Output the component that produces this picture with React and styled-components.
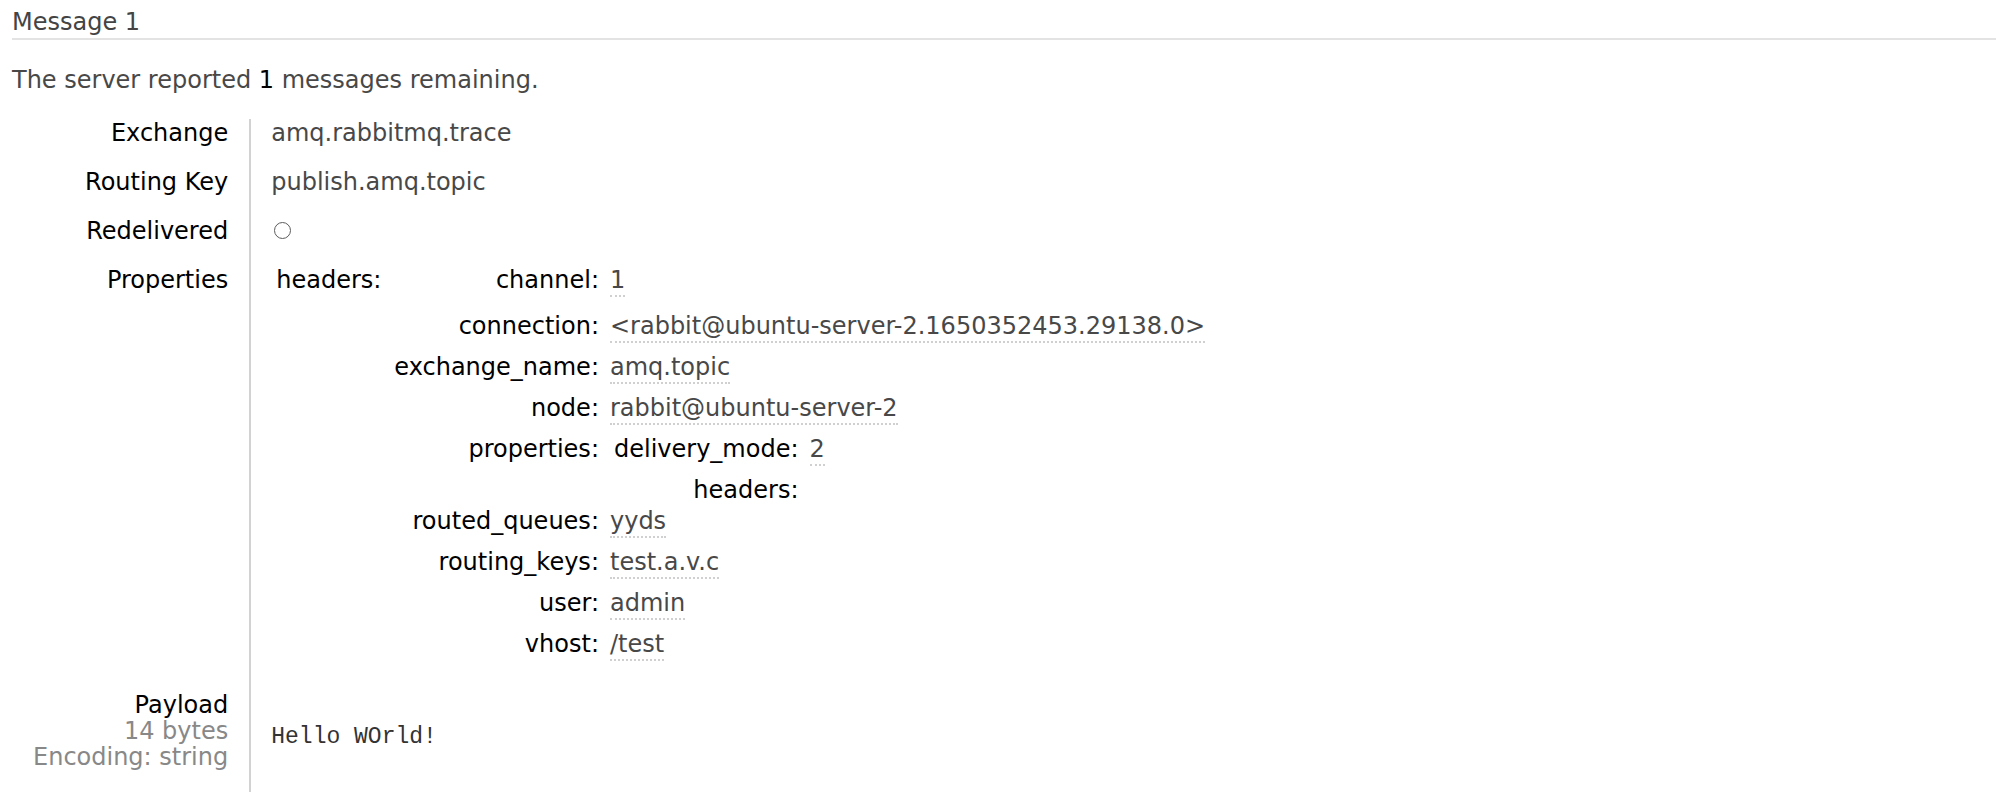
import React from 'react';
import styled, { createGlobalStyle } from 'styled-components';

const GlobalStyle = createGlobalStyle`
  html, body { margin: 0; padding: 0; background: #ffffff; }
  body {
    font-family: "DejaVu Sans", Verdana, sans-serif;
    font-size: 24px;
    color: #484848;
  }
`;

const Page = styled.div`
  padding: 8px 0 0 12px;
`;

const Title = styled.h3`
  margin: 0;
  font-size: 24px;
  font-weight: normal;
  line-height: 29px;
  color: #444;
  padding-bottom: 1px;
  border-bottom: 2px solid #e3e3e3;
`;

const Notice = styled.p`
  margin: 26px 0 0;
  line-height: 29px;
  color: #484848;
`;

const Count = styled.span`
  color: #000;
`;

const Facts = styled.table`
  border-spacing: 0;
  margin-top: 24px;
`;

const Label = styled.th`
  text-align: right;
  vertical-align: top;
  font-weight: normal;
  color: #000;
  white-space: nowrap;
  padding: ${(p) => (p.$stack ? '1px' : '0')} 21px 20px 21px;
  line-height: ${(p) => (p.$stack ? '26px' : '29px')};
  border-right: 2px solid #d2d2d2;
`;

const Sub = styled.span`
  display: block;
  color: #888;
`;

const Value = styled.td`
  vertical-align: top;
  padding: 0 0 20px 20px;
  line-height: 29px;
  color: #484848;
  white-space: nowrap;
`;

const Circle = styled.span`
  display: inline-block;
  vertical-align: top;
  width: 15px;
  height: 15px;
  margin: 5px 0 0 3px;
  border: 1.5px solid #5c5c5c;
  border-radius: 50%;
`;

const Nest = styled.table`
  border-spacing: 0;
`;

const NestKey = styled.th`
  text-align: left;
  vertical-align: top;
  font-weight: normal;
  color: #000;
  white-space: nowrap;
  line-height: 29px;
  padding: 0 9px 0 5px;
`;

const NestVal = styled.td`
  vertical-align: top;
  padding: 0;
`;

const Mini = styled.table`
  border-spacing: 0;
`;

const MiniKey = styled.th`
  text-align: right;
  vertical-align: top;
  font-weight: normal;
  color: #000;
  white-space: nowrap;
  line-height: 29px;
  padding: 0 5px ${(p) => (p.$extra ? '17px' : '2px')} 4px;
`;

const MiniVal = styled.td`
  vertical-align: top;
  line-height: 29px;
  white-space: nowrap;
  padding: 0 0 0 6px;
`;

const Val = styled.span`
  display: inline-block;
  color: #484848;
  border-bottom: 2px dotted #d0d0d0;
  margin-bottom: 10px;
`;

const Pre = styled.pre`
  font-family: "Liberation Mono", "Courier New", monospace;
  font-size: 23px;
  line-height: 27px;
  color: #333;
  margin: 33px 0 40px;
`;

const headers = [
  ['channel', '1'],
  ['connection', '<rabbit@ubuntu-server-2.1650352453.29138.0>'],
  ['exchange_name', 'amq.topic'],
  ['node', 'rabbit@ubuntu-server-2'],
  ['properties', null],
  ['routed_queues', 'yyds'],
  ['routing_keys', 'test.a.v.c'],
  ['user', 'admin'],
  ['vhost', '/test'],
];

function PropsInner() {
  return (
    <Mini>
      <tbody>
        <tr>
          <MiniKey>delivery_mode:</MiniKey>
          <MiniVal><Val>2</Val></MiniVal>
        </tr>
        <tr>
          <MiniKey>headers:</MiniKey>
          <MiniVal />
        </tr>
      </tbody>
    </Mini>
  );
}

export default function App() {
  return (
    <>
      <GlobalStyle />
      <Page>
        <Title>Message 1</Title>
        <Notice>
          The server reported <Count>1</Count> messages remaining.
        </Notice>
        <Facts>
          <tbody>
            <tr>
              <Label>Exchange</Label>
              <Value>amq.rabbitmq.trace</Value>
            </tr>
            <tr>
              <Label>Routing Key</Label>
              <Value>publish.amq.topic</Value>
            </tr>
            <tr>
              <Label>Redelivered</Label>
              <Value><Circle /></Value>
            </tr>
            <tr>
              <Label>Properties</Label>
              <Value>
                <Nest>
                  <tbody>
                    <tr>
                      <NestKey>headers:</NestKey>
                      <NestVal>
                        <Mini>
                          <tbody>
                            {headers.map(([k, v], i) => (
                              <tr key={k}>
                                <MiniKey $extra={i === 0}>{k}:</MiniKey>
                                <MiniVal>
                                  {v === null ? <PropsInner /> : <Val>{v}</Val>}
                                </MiniVal>
                              </tr>
                            ))}
                          </tbody>
                        </Mini>
                      </NestVal>
                    </tr>
                  </tbody>
                </Nest>
              </Value>
            </tr>
            <tr>
              <Label $stack>
                Payload
                <Sub>14 bytes</Sub>
                <Sub>Encoding: string</Sub>
              </Label>
              <Value>
                <Pre>Hello WOrld!</Pre>
              </Value>
            </tr>
          </tbody>
        </Facts>
      </Page>
    </>
  );
}
